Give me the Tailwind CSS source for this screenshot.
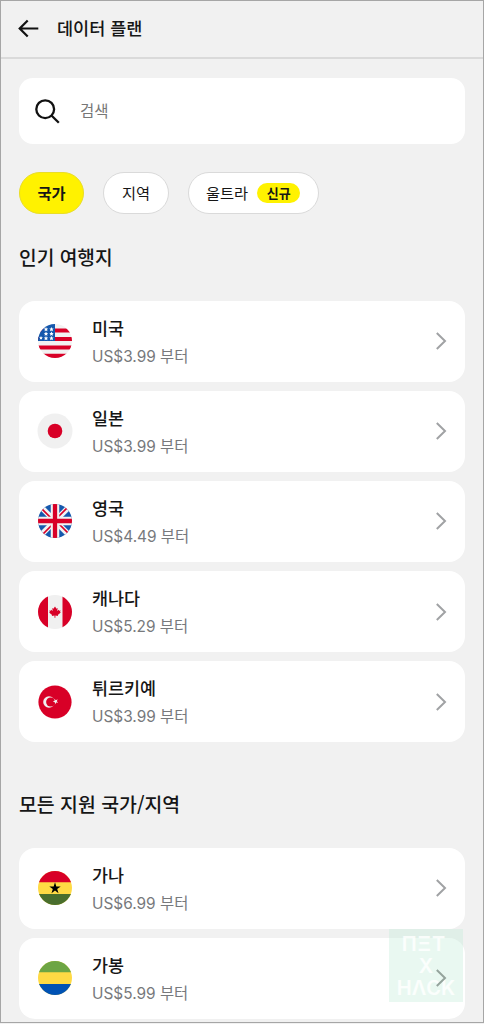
<!DOCTYPE html>
<html lang="ko">
<head>
<meta charset="utf-8">
<title>데이터 플랜</title>
<script src="https://cdn.jsdelivr.net/npm/@tailwindcss/browser@4"></script>
</head>
<body class="bg-[#f1f1f1]">
<svg class="absolute h-0 w-0">
  <symbol id="chev" viewBox="0 0 12 20"><path d="M1.8 2 10 10 1.8 18" fill="none" stroke="currentColor" stroke-width="2"/></symbol>
</svg>
<div class="relative h-[1023px] w-[484px] overflow-hidden border border-[#a6a6a6] bg-[#f1f1f1] font-['Inter','Noto_Sans_CJK_KR',sans-serif] text-[#161616]">
  <header class="flex h-[58px] items-center border-b-2 border-[#dadada] pb-[3px] pl-[17px]">
    <svg class="h-5 w-[21px]" viewBox="0 0 21 20" fill="none" stroke="#111" stroke-width="2.2"><path d="M20.3 10.5H1.8M9.7 2.5 1.7 10.5l8 8"/></svg>
    <h1 class="ml-[18px] text-[17.5px] leading-6 font-medium font-['Noto_Sans_CJK_KR',sans-serif]">데이터 플랜</h1>
  </header>
  <main class="px-[18px]">
    <div class="mt-[19px] flex h-[66px] items-center rounded-[14px] bg-white pl-4">
      <svg class="h-[25px] w-[25px]" viewBox="0 0 25 25" fill="none" stroke="#111" stroke-width="2.3"><circle cx="10.2" cy="10.2" r="8.9"/><path d="m16.5 16.5 7.3 7.3"/></svg>
      <span class="ml-5 text-[15.5px] text-[#777] font-['Noto_Sans_CJK_KR',sans-serif]">검색</span>
    </div>
    <div class="mt-7 flex h-[42px] gap-[19.3px] text-[15.3px] font-['Noto_Sans_CJK_KR',sans-serif]">
      <div class="flex w-[65.2px] items-center justify-center rounded-full border border-[#e9dd28] bg-[#fff200] pb-0.5 font-bold">국가</div>
      <div class="flex w-[65.2px] items-center justify-center rounded-full border border-[#dadada] bg-white pb-0.5">지역</div>
      <div class="flex w-[131px] items-center rounded-full border border-[#dadada] bg-white pl-[17px]"><span class="pb-0.5">울트라</span><span class="ml-[9px] flex h-5 w-[43px] items-center justify-center rounded-full bg-[#fff200] text-[13px] font-bold">신규</span></div>
    </div>
    <h2 class="mt-[29px] h-[28px] text-[19.2px] leading-7 font-medium font-['Noto_Sans_CJK_KR',sans-serif]">인기 여행지</h2>
    <div class="mt-[29.6px] flex flex-col gap-[9.2px]">
      <div class="flex h-[81px] items-center rounded-[16px] bg-white pr-[18px] pl-[19px]">
        <svg class="h-[34px] w-[34px] rounded-full" viewBox="0 0 34 34"><path fill="#f2f2f2" d="M0 0h34v34H0z"/><path fill="#d80027" d="M0 4.5h34v4H0zm0 8.5h34v4H0zm0 8.500h34v4H0zm0 8.200h34V34H0z"/><path fill="#1558ad" d="M0 0h17v17H0z"/><path fill="#fff" d="m8 3 .7 1.400 1.500.2-1.100 1 .3 1.600L8 6.400l-1.400.8.3-1.600-1.100-1 1.500-.2zm5.500 0 .7 1.400 1.500.2-1.100 1 .3 1.600-1.400-.8-1.400.8.3-1.600-1.100-1 1.500-.2zM8 7.500l.7 1.400 1.500.2-1.100 1 .3 1.600L8 10.900l-1.400.8.3-1.600-1.100-1 1.500-.2zm5.500 0 .7 1.400 1.500.2-1.100 1 .3 1.600-1.400-.8-1.400.8.3-1.600-1.100-1 1.500-.2zM8 12l.7 1.400 1.500.2-1.100 1 .3 1.600-1.400-.8-1.400.8.3-1.600-1.100-1 1.500-.2zm5.500 0 .7 1.400 1.500.2-1.100 1 .3 1.600-1.400-.8-1.400.8.3-1.600-1.100-1 1.500-.2zM3 12l.6 1.200 1.300.2-1 .9.200 1.300L3 15l-1.200.6.3-1.300-1-.9 1.300-.2z"/></svg>
        <div class="mt-1 ml-5 flex-1"><div class="text-[17.4px] leading-[26px] font-medium font-['Noto_Sans_CJK_KR',sans-serif]">미국</div><div class="text-[15.4px] leading-[31px] text-[#77797c]">US$3.99 부터</div></div>
        <svg class="h-5 w-3 text-[#a0a2a4]"><use href="#chev"/></svg>
      </div>
      <div class="flex h-[81px] items-center rounded-[16px] bg-white pr-[18px] pl-[19px]">
        <svg class="h-[34px] w-[34px] overflow-visible" viewBox="0 0 34 34"><circle cx="17" cy="17" r="17.5" fill="#f0f0f0"/><circle cx="17" cy="17" r="7.3" fill="#d80027"/></svg>
        <div class="mt-1 ml-5 flex-1"><div class="text-[17.4px] leading-[26px] font-medium font-['Noto_Sans_CJK_KR',sans-serif]">일본</div><div class="text-[15.4px] leading-[31px] text-[#77797c]">US$3.99 부터</div></div>
        <svg class="h-5 w-3 text-[#a0a2a4]"><use href="#chev"/></svg>
      </div>
      <div class="flex h-[81px] items-center rounded-[16px] bg-white pr-[18px] pl-[19px]">
        <svg class="h-[34px] w-[34px] rounded-full" viewBox="0 0 34 34"><path fill="#1558ad" d="M0 0h34v34H0z"/><path d="M0 0l34 34M34 0 0 34" stroke="#f2f2f2" stroke-width="5.5"/><path d="M0 1l14 14M34 33 20 19M33 0 19 14M1 34l14-14" stroke="#d80027" stroke-width="1.7"/><path d="M17 0v34M0 17h34" stroke="#f2f2f2" stroke-width="8.5"/><path d="M17 0v34M0 17h34" stroke="#d80027" stroke-width="4.3"/></svg>
        <div class="mt-1 ml-5 flex-1"><div class="text-[17.4px] leading-[26px] font-medium font-['Noto_Sans_CJK_KR',sans-serif]">영국</div><div class="text-[15.4px] leading-[31px] text-[#77797c]">US$4.49 부터</div></div>
        <svg class="h-5 w-3 text-[#a0a2a4]"><use href="#chev"/></svg>
      </div>
      <div class="flex h-[81px] items-center rounded-[16px] bg-white pr-[18px] pl-[19px]">
        <svg class="h-[34px] w-[34px] rounded-full" viewBox="0 0 34 34"><path fill="#f0f0f0" d="M0 0h34v34H0z"/><path fill="#d80027" d="M0 0h10v34H0zM24.500 0H34v34h-9.500zM17 11.500l1.500 2.200 1.200-.6-.5 3 1.600-1.300.4.9 1.500-.1-.7 1.400.8.5-3 2.400.3 1-2.700-.4v2.200h-.9v-2.200l-2.700.4.3-1-3-2.400.8-.5-.7-1.400 1.500.1.400-.9 1.600 1.300-.5-3 1.200.6z"/></svg>
        <div class="mt-1 ml-5 flex-1"><div class="text-[17.4px] leading-[26px] font-medium font-['Noto_Sans_CJK_KR',sans-serif]">캐나다</div><div class="text-[15.4px] leading-[31px] text-[#77797c]">US$5.29 부터</div></div>
        <svg class="h-5 w-3 text-[#a0a2a4]"><use href="#chev"/></svg>
      </div>
      <div class="flex h-[81px] items-center rounded-[16px] bg-white pr-[18px] pl-[19px]">
        <svg class="h-[34px] w-[34px]" viewBox="0 0 34 34"><circle cx="17" cy="17" r="16.600" fill="#d80027"/><circle cx="11" cy="17" r="5.800" fill="#f0f0f0"/><circle cx="12.700" cy="17" r="4.600" fill="#d80027"/><path fill="#f0f0f0" d="m16.300 13.800 1.500 1.400 1.900-.9-.9 1.900 1.400 1.500-2-.3-1 1.900-.4-2.100-2-.4 1.800-1z"/></svg>
        <div class="mt-1 ml-5 flex-1"><div class="text-[17.4px] leading-[26px] font-medium font-['Noto_Sans_CJK_KR',sans-serif]">튀르키예</div><div class="text-[15.4px] leading-[31px] text-[#77797c]">US$3.99 부터</div></div>
        <svg class="h-5 w-3 text-[#a0a2a4]"><use href="#chev"/></svg>
      </div>
    </div>
    <h2 class="mt-[47.500px] h-[28px] text-[19.4px] leading-7 font-medium font-['Noto_Sans_CJK_KR',sans-serif]">모든 지원 국가/지역</h2>
    <div class="mt-[30px] flex flex-col gap-[9.1px]">
      <div class="flex h-[81px] items-center rounded-[16px] bg-white pr-[18px] pl-[19px]">
        <svg class="h-[34px] w-[34px] rounded-full" viewBox="0 0 34 34"><path fill="#ffda44" d="M0 0h34v34H0z"/><path fill="#d80027" d="M0 0h34v11.300H0z"/><path fill="#496e2d" d="M0 23h34v11H0z"/><path fill="#000" d="m17 11.300 1.350 4.150h4.360l-3.530 2.560 1.350 4.150L17 19.600l-3.530 2.560 1.350-4.150-3.530-2.560h4.360z"/></svg>
        <div class="mt-1 ml-5 flex-1"><div class="text-[17.4px] leading-[26px] font-medium font-['Noto_Sans_CJK_KR',sans-serif]">가나</div><div class="text-[15.4px] leading-[31px] text-[#77797c]">US$6.99 부터</div></div>
        <svg class="h-5 w-3 text-[#a0a2a4]"><use href="#chev"/></svg>
      </div>
      <div class="flex h-[81px] items-center rounded-[16px] bg-white pr-[18px] pl-[19px]">
        <svg class="h-[34px] w-[34px] rounded-full" viewBox="0 0 34 34"><path fill="#ffda44" d="M0 0h34v34H0z"/><path fill="#6da544" d="M0 0h34v11.300H0z"/><path fill="#0052b4" d="M0 23h34v11H0z"/></svg>
        <div class="mt-1 ml-5 flex-1"><div class="text-[17.4px] leading-[26px] font-medium font-['Noto_Sans_CJK_KR',sans-serif]">가봉</div><div class="text-[15.4px] leading-[31px] text-[#77797c]">US$5.99 부터</div></div>
        <svg class="relative z-10 h-5 w-3 text-[#94a39c]"><use href="#chev"/></svg>
      </div>
    </div>
  </main>
  <div class="absolute top-[928px] left-[388px] flex h-[73px] w-[74px] flex-col items-center bg-[#c9eddd]/40 pt-[4px] text-[20px] leading-[22px] font-semibold text-white/80">
    <div class="h-[22px] pr-1 tracking-[1px]">ΠΞT</div>
    <div class="h-[22px]">X</div>
    <div class="h-[22px]">HΛCK</div>
  </div>
</div>
</body>
</html>
